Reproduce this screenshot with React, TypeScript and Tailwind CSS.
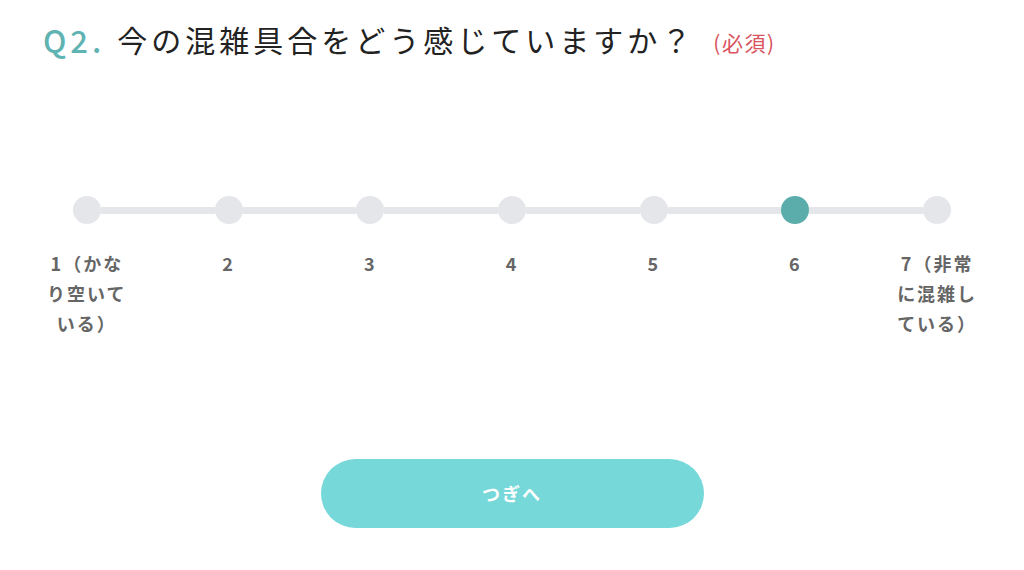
import { useState } from 'react';

const options = [
    { value: 1, label: '1（かなり空いている）' },
    { value: 2, label: '2' },
    { value: 3, label: '3' },
    { value: 4, label: '4' },
    { value: 5, label: '5' },
    { value: 6, label: '6' },
    { value: 7, label: '7（非常に混雑している）' },
];

export default function App() {
    const [selected, setSelected] = useState(6);

    return (
        <div
            className="w-full h-[570px] bg-white overflow-hidden"
            style={{ fontFamily: '"Noto Sans CJK JP", "Noto Sans", sans-serif' }}
        >
            {/* Question */}
            <div className="flex items-center pl-[43px] pt-[14px] h-[50px] box-content">
                <span className="text-[31px] leading-none font-medium text-[#5fb3b2] tracking-[4px]">Q2.</span>
                <h1 className="ml-[12px] text-[30px] leading-none text-[#222] tracking-[4px]">
                    今の混雑具合をどう感じていますか？
                </h1>
                <span className="ml-[18px] mt-[6px] text-[21px] leading-none text-[#d9545e] tracking-[1.5px]">(必須)</span>
            </div>

            {/* Scale */}
            <div className="grid grid-cols-7 px-[16px] mt-[132px]">
                {options.map((opt, i) => (
                    <div key={opt.value} className="flex flex-col items-center">
                        <div className="flex items-center w-full h-[28px]">
                            <div className={`flex-1 h-[7px] ${i === 0 ? '' : 'bg-[#e4e6e9]'}`} />
                            <button
                                onClick={() => setSelected(opt.value)}
                                className={`w-[28px] h-[28px] rounded-full shrink-0 ${
                                    selected === opt.value ? 'bg-[#5aadab]' : 'bg-[#e4e6e9]'
                                }`}
                            />
                            <div className={`flex-1 h-[7px] ${i === options.length - 1 ? '' : 'bg-[#e4e6e9]'}`} />
                        </div>
                        <p className="mt-[24px] w-[88px] text-center text-[18px] leading-[30px] font-bold text-[#666] tracking-[2px] break-all">
                            {opt.label}
                        </p>
                    </div>
                ))}
            </div>

            {/* Next */}
            <div className="flex justify-center mt-[121px]">
                <button className="w-[383px] h-[69px] rounded-full bg-[#76d8d9] text-white text-[18px] font-bold tracking-[2px]">
                    つぎへ
                </button>
            </div>
        </div>
    );
}
